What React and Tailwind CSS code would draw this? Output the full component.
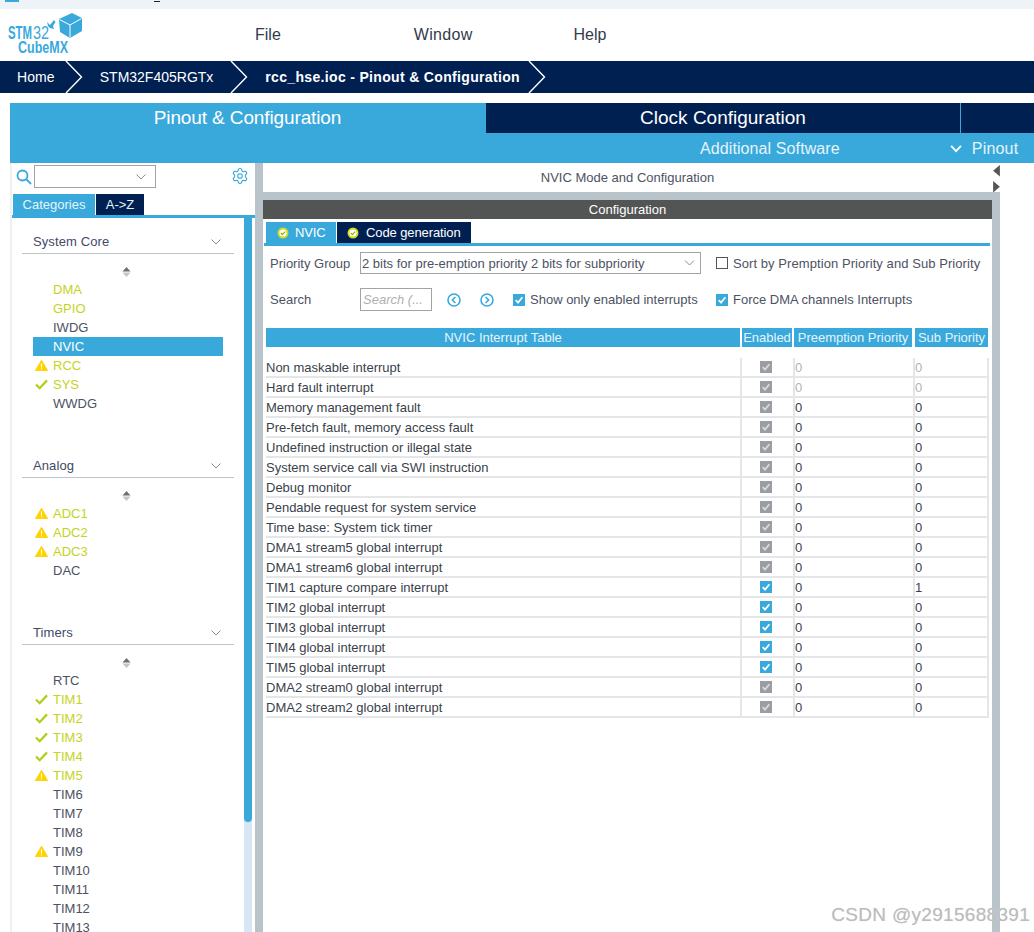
import React from "react";
import { Settings } from "lucide-react";

const Chev = ({ className = "w-[10px] h-[6px]", color = "#8a8f94" }) => (
  <svg viewBox="0 0 10 6" className={className} fill="none" stroke={color} strokeWidth="1"><path d="M0.5 0.5 L5 5 L9.5 0.5" /></svg>
);
const Warn = () => (
  <svg viewBox="0 0 14 12" className="w-[13px] h-[11px]"><path d="M7 0.3 L13.8 11.7 L0.2 11.7 Z" fill="#ffd200" stroke="#ffd200" strokeLinejoin="round" /><rect x="6.4" y="3.8" width="1.2" height="4.4" fill="#fff" /><rect x="6.4" y="9" width="1.2" height="1.3" fill="#fff" /></svg>
);
const Check = () => (
  <svg viewBox="0 0 14 12" className="w-[13px] h-[11px]" fill="none" stroke="#b5cc18" strokeWidth="2.4"><path d="M1 6 L5 10 L13 1.5" /></svg>
);
const Sort = () => (
  <div className="h-[13px] mt-[13px] flex justify-center pr-[3px]">
    <svg viewBox="0 0 9 10" className="w-[9px] h-[10px]"><path d="M4.5 0 L8.5 4.4 L0.5 4.4 Z" fill="#6f6f6f" /><path d="M4.5 10 L8.5 5.6 L0.5 5.6 Z" fill="#c4c4c4" /></svg>
  </div>
);
const Item = ({ label, c, icon, sel }) => (
  <div className={`h-[19px] flex items-center text-[13px] ${sel ? "bg-[#39a9dc] text-white" : ""}`} style={{ color: sel ? "#fff" : c === "g" ? "#c4d41c" : "#4d5263" }}>
    <div className="w-[20px] pl-[2px] flex shrink-0">{icon === "w" ? <Warn /> : icon === "c" ? <Check /> : null}</div>
    {label}
  </div>
);
const Section = ({ title, items, h }) => (
  <div className="flex flex-col shrink-0" style={{ height: h }}>
    <div className="h-[25px] pt-[1px] mx-[10px] w-[212px] border-b border-[#bfc5c9] flex items-center justify-between pl-[11px] pr-[13px] text-[13px] tracking-[0.1px] text-[#3f4a68]">
      <span>{title}</span><Chev />
    </div>
    <div className="ml-[21px] w-[190px]">
      <Sort />
      {items.map((i) => <Item key={i[0]} label={i[0]} c={i[1]} icon={i[2]} sel={i[3]} />)}
    </div>
  </div>
);

const BoxCheck = ({ color = "#39a9dc", tick = "#fff" }) => (
  <span className="w-[12px] h-[12px] inline-flex items-center justify-center shrink-0" style={{ background: color }}>
    <svg viewBox="0 0 12 12" className="w-[12px] h-[12px]" fill="none" stroke={tick} strokeWidth="1.7"><path d="M2.7 6.2 L5 8.6 L9.4 3.2" /></svg>
  </span>
);
const TabIcon = () => (
  <svg viewBox="0 0 12 12" className="w-[12px] h-[12px]"><circle cx="6" cy="6" r="5.5" fill="#cfdc1f" /><circle cx="6" cy="6" r="3.6" fill="#fff" /><path d="M3.8 6 L5.4 7.6 L8.2 4.6" fill="none" stroke="#9aa814" strokeWidth="1.2" /></svg>
);
const Circ = ({ d }) => (
  <svg viewBox="0 0 14 14" className="w-[14px] h-[14px]" fill="none" stroke="#39a9dc" strokeWidth="1.6"><circle cx="7" cy="7" r="6" /><path d={d} /></svg>
);

const rows = [
  ["Non maskable interrupt", 0, 0, 0],
  ["Hard fault interrupt", 0, 0, 0],
  ["Memory management fault", 1, 0, 0],
  ["Pre-fetch fault, memory access fault", 1, 0, 0],
  ["Undefined instruction or illegal state", 1, 0, 0],
  ["System service call via SWI instruction", 1, 0, 0],
  ["Debug monitor", 1, 0, 0],
  ["Pendable request for system service", 1, 0, 0],
  ["Time base: System tick timer", 1, 0, 0],
  ["DMA1 stream5 global interrupt", 1, 0, 0],
  ["DMA1 stream6 global interrupt", 1, 0, 0],
  ["TIM1 capture compare interrupt", 2, 0, 1],
  ["TIM2 global interrupt", 2, 0, 0],
  ["TIM3 global interrupt", 2, 0, 0],
  ["TIM4 global interrupt", 2, 0, 0],
  ["TIM5 global interrupt", 2, 0, 0],
  ["DMA2 stream0 global interrupt", 1, 0, 0],
  ["DMA2 stream2 global interrupt", 1, 0, 0],
];

const core = [["DMA", "g"], ["GPIO", "g"], ["IWDG"], ["NVIC", 0, 0, true], ["RCC", "g", "w"], ["SYS", "g", "c"], ["WWDG"]];
const analog = [["ADC1", "g", "w"], ["ADC2", "g", "w"], ["ADC3", "g", "w"], ["DAC"]];
const timers = [["RTC"], ["TIM1", "g", "c"], ["TIM2", "g", "c"], ["TIM3", "g", "c"], ["TIM4", "g", "c"], ["TIM5", "g", "w"], ["TIM6"], ["TIM7"], ["TIM8"], ["TIM9", 0, "w"], ["TIM10"], ["TIM11"], ["TIM12"], ["TIM13"]];

const Crumb = () => (
  <svg viewBox="0 0 18 32" className="w-[18px] h-[32px] shrink-0" fill="none" stroke="#fff" strokeWidth="1.4"><path d="M1 0 L16.5 16 L1 32" /></svg>
);

export default function App() {
  return (
    <div className="relative w-[1034px] h-[932px] overflow-hidden bg-white flex flex-col" style={{ fontFamily: '"Liberation Sans", Arial, sans-serif' }}>
      <div className="h-[9px] bg-[#eef3f8] flex shrink-0">
        <div className="ml-[5px] w-[14px] h-[2px] bg-[#39a9dc]" />
        <div className="ml-[135px] mt-[1px] w-[6px] h-px bg-[#222]" />
      </div>
      <div className="h-[52px] flex items-center relative shrink-0 text-[16px] text-[#333a4d]">
        <svg viewBox="0 11 84 44" className="w-[84px] h-[44px] self-start mt-[2px] shrink-0">
          <path d="M59 19 L72 13 L82 18 L82 31 L70 38 L60 32 Z" fill="#39a9dc" />
          <path d="M59.5 19.5 L70 25 L81.5 18.5 M70 25 L70 37.5" fill="none" stroke="#fff" strokeWidth="1" />
          <path d="M47 22 L50 25 L54 20 L55.5 22 L53 26 L54 29 L50 28 L48 26 Z" fill="#39a9dc" />
          <text x="8" y="39" fontSize="18" fontWeight="700" fill="#39a9dc" textLength="24" lengthAdjust="spacingAndGlyphs">STM</text>
          <text x="33" y="39" fontSize="18" fill="#39a9dc" textLength="16" lengthAdjust="spacingAndGlyphs">32</text>
          <text x="18" y="53" fontSize="16.5" fontWeight="700" fill="#39a9dc" textLength="50" lengthAdjust="spacingAndGlyphs">CubeMX</text>
        </svg>
        <span className="ml-[171px]">File</span>
        <span className="ml-[133px] tracking-[0.3px]">Window</span>
        <span className="ml-[101px]">Help</span>
      </div>
      <div className="h-[32px] bg-[#002052] flex items-center text-[14px] text-white shrink-0">
        <span className="ml-[17px] tracking-[0.1px]">Home</span>
        <span className="ml-[10px] flex"><Crumb /></span>
        <span className="ml-[17px]">STM32F405RGTx</span>
        <span className="ml-[17px] flex"><Crumb /></span>
        <span className="ml-[17px] font-bold tracking-[0.33px]">rcc_hse.ioc - Pinout &amp; Configuration</span>
        <span className="ml-[8px] flex"><Crumb /></span>
      </div>
      <div className="h-[10px] shrink-0" />
      <div className="ml-[10px] h-[60px] shrink-0 bg-[#39a9dc] flex flex-col text-white">
        <div className="h-[30px] flex text-[19px]">
          <div className="w-[475px] flex justify-center items-center tracking-[-0.12px]">Pinout &amp; Configuration</div>
          <div className="ml-px w-[474px] bg-[#002052] flex justify-center items-center">Clock Configuration</div>
          <div className="ml-px flex-1 bg-[#002052]" />
        </div>
        <div className="h-[30px] pt-[1px] flex items-center text-[16px] text-[#e6f4fb]">
          <span className="ml-[690px] tracking-[0.1px]">Additional Software</span>
          <svg viewBox="0 0 14 9" className="ml-[110px] w-[13px] h-[8px] mt-[1px]" fill="none" stroke="#fff" strokeWidth="2"><path d="M1 1 L6.5 7 L12 1" /></svg>
          <span className="ml-[9px] tracking-[0.2px]">Pinout</span>
        </div>
      </div>

      <div className="flex-1 flex min-h-0">
        {/* left */}
        <div className="ml-[10px] w-[245px] shrink-0 flex flex-col border-l-2 border-[#f0f0f0] overflow-hidden">
          <div className="h-[31px] flex shrink-0">
            <svg viewBox="0 0 16 16" className="w-[16px] h-[16px] ml-[4px] mt-[6px] shrink-0" fill="none" stroke="#39a9dc" strokeWidth="1.8"><circle cx="6.5" cy="6.5" r="5" /><path d="M10.2 10.2 L15 15" /></svg>
            <div className="ml-[2px] mt-[2px] w-[122px] h-[23px] border border-[#a0a4a8] flex items-center justify-end pr-[9px] shrink-0"><Chev /></div>
            <Settings className="ml-[75px] mt-[4px] shrink-0" size={18} color="#39a9dc" strokeWidth={1.5} />
          </div>
          <div className="h-[21px] flex text-[13px] text-[#e6f4fb] shrink-0">
            <div className="ml-px w-[82px] bg-[#39a9dc] flex items-center justify-center">Categories</div>
            <div className="ml-px w-[48px] bg-[#002052] flex items-center justify-center">A-&gt;Z</div>
          </div>
          <div className="h-[3px] bg-[#39a9dc] shrink-0" />
          <div className="flex-1 flex min-h-0 relative">
            <div className="w-[232px] pt-[11px] shrink-0 flex flex-col">
              <Section title="System Core" items={core} h="224px" />
              <Section title="Analog" items={analog} h="167px" />
              <Section title="Timers" items={timers} h="320px" />
            </div>
            <div className="w-[8px] bg-[#d6e6f5] shrink-0 h-full">
              <div className="h-[604px] bg-[#39a9dc] rounded-b-[4px]" />
            </div>
          </div>
        </div>
        <div className="w-[8px] bg-[#b9c4ca] shrink-0" />

        {/* right */}
        <div className="w-[729px] shrink-0 flex flex-col">
          <div className="h-[29px] flex items-center justify-center text-[13px] text-[#4d5263] shrink-0">NVIC Mode and Configuration</div>
          <div className="h-[8px] bg-[#b9c4ca] shrink-0" />
          <div className="h-[19px] bg-[#535554] flex items-center justify-center text-[13px] text-white shrink-0">Configuration</div>
          <div className="h-[21px] mt-[3px] ml-[3px] flex text-[13px] tracking-[-0.1px] text-white shrink-0">
            <div className="w-[70px] bg-[#39a9dc] flex items-center pl-[11px] gap-[6px]"><TabIcon />NVIC</div>
            <div className="ml-px w-[134px] bg-[#002052] flex items-center pl-[10px] gap-[7px]"><TabIcon />Code generation</div>
          </div>
          <div className="h-[3px] bg-[#39a9dc] ml-px w-[726px] shrink-0" />
          <div className="text-[13px] text-[#4d5263] flex flex-col">
            <div className="h-[22px] mt-[6px] flex items-center">
              <span className="ml-[7px] w-[90px] pt-[1px]">Priority Group</span>
              <div className="w-[341px] h-[22px] border border-[#a0a4a8] flex items-center justify-between pl-[1px] pr-[5px] shrink-0 text-[#4d5263]">
                <span className="pt-[1px]">2 bits for pre-emption priority 2 bits for subpriority</span><Chev className="w-[11px] h-[6px]" />
              </div>
              <span className="ml-[15px] w-[12px] h-[12px] border border-[#555] shrink-0" />
              <span className="ml-[5px] pt-[1px] tracking-[0.07px]">Sort by Premption Priority and Sub Priority</span>
            </div>
            <div className="h-[23px] mt-[14px] flex items-center">
              <span className="ml-[7px] w-[90px] pt-[1px]">Search</span>
              <div className="w-[72px] h-[23px] border border-[#a0a4a8] flex items-center pl-[2px] italic text-[#b0b0b0] shrink-0">Search (...</div>
              <span className="ml-[15px] flex"><Circ d="M8.4 4 L5.4 7 L8.4 10" /></span>
              <span className="ml-[19px] flex"><Circ d="M5.6 4 L8.6 7 L5.6 10" /></span>
              <span className="ml-[19px] flex"><BoxCheck /></span>
              <span className="ml-[5px] w-[186px] pt-[1px]">Show only enabled interrupts</span>
              <span className="flex"><BoxCheck /></span>
              <span className="ml-[5px] pt-[1px]">Force DMA channels Interrupts</span>
            </div>
            <div className="h-[19px] mt-[17px] ml-[3px] flex text-[#e6f4fb]">
              <div className="w-[474px] bg-[#39a9dc] flex items-center justify-center">NVIC Interrupt Table</div>
              <div className="ml-[2px] w-[50px] bg-[#39a9dc] flex items-center justify-center">Enabled</div>
              <div className="ml-[2px] w-[118px] bg-[#39a9dc] flex items-center justify-center">Preemption Priority</div>
              <div className="ml-[3px] w-[73px] bg-[#39a9dc] flex items-center justify-center">Sub Priority</div>
            </div>
            <div className="mt-[11px] ml-[3px] w-[723px] flex flex-col text-[#3a3f4b]">
              {rows.map((r) => (
                <div key={r[0]} className="h-[20px] flex border-b-2 border-[#e4e6e8]">
                  <div className="w-[474px] flex items-center pt-[1px]">{r[0]}</div>
                  <div className="w-[53px] border-l-2 border-[#e4e6e8] flex items-center justify-center pr-[3px]"><BoxCheck color={r[1] === 2 ? "#39a9dc" : "#9a9ea3"} tick={r[1] === 2 ? "#fff" : "#d8dadc"} /></div>
                  <div className={`w-[120px] border-l-2 border-[#e4e6e8] flex items-center pt-[1px] ${r[1] === 0 ? "text-[#b0b4b8]" : ""}`}>{r[2]}</div>
                  <div className={`flex-1 border-l-2 border-r-2 border-[#e4e6e8] flex items-center pt-[1px] ${r[1] === 0 ? "text-[#b0b4b8]" : ""}`}>{r[3]}</div>
                </div>
              ))}
            </div>
          </div>
        </div>
        <div className="w-[8px] shrink-0 flex flex-col">
          <div className="h-[29px] flex flex-col items-end pt-[2px] gap-[4px] shrink-0">
            <svg viewBox="0 0 7 12" className="w-[7px] h-[12px]"><path d="M7 0 L0 6 L7 12 Z" fill="#555" /></svg>
            <svg viewBox="0 0 7 12" className="w-[7px] h-[12px]"><path d="M0 0 L7 6 L0 12 Z" fill="#555" /></svg>
          </div>
          <div className="flex-1 bg-[#b9c4ca]" />
        </div>
      </div>
      <div className="absolute right-[4px] bottom-[3px] text-[19px] tracking-[0.3px] text-[#bcbcbc] [text-shadow:0_0_1px_#dddddd]">CSDN @y2915688391</div>
    </div>
  );
}
